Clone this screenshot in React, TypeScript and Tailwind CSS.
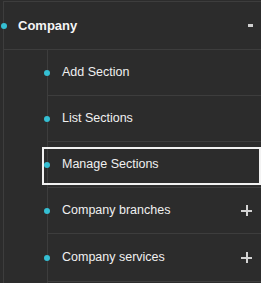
import React from "react";

const Dot = ({ className }: { className: string }) => (
  <span className={"shrink-0 w-[6px] h-[6px] rounded-full bg-[#35bfd3] " + className} />
);

const Plus = () => (
  <span className="ml-auto mr-[9px] flex flex-col items-center justify-center w-[11px] h-[11px] relative">
    <span className="w-[11px] h-[2px] bg-[#d4d4d4]" />
    <span className="absolute w-[2px] h-[11px] bg-[#d4d4d4]" />
  </span>
);

const Row = ({
  label,
  plus,
  focused,
  h = "h-[46px]",
}: {
  label: string;
  plus?: boolean;
  focused?: boolean;
  h?: string;
}) => (
  <div className={"relative border-b border-[#3d3d3d] flex items-center " + h}>
    {focused && (
      <div className="absolute left-[-6px] top-[5px] w-[219px] h-[38px] border-2 border-[#f2f2f2]" />
    )}
    <Dot className="ml-[-4px] mr-[12px]" />
    <span className="text-[12.5px] text-[#f0f0f0] leading-none">{label}</span>
    {plus && <Plus />}
  </div>
);

export default function App() {
  return (
    <div className="w-[261px] h-[283px] bg-[#2c2c2c] overflow-hidden font-['Liberation_Sans',Arial,sans-serif]">
      <div className="ml-[3px] mt-[1px] border-l border-t border-[#3d3d3d] h-[400px]">
        <div className="h-[48px] border-b border-[#3d3d3d] flex items-center">
          <Dot className="ml-[-3px] mr-[11px]" />
          <span className="text-[13px] font-bold text-[#f5f5f5] leading-none">Company</span>
          <span className="ml-auto mr-[8px] w-[5px] h-[3px] bg-[#cfcfcf]" />
        </div>
        <div className="ml-[43px] border-l border-[#3d3d3d] h-[400px] flex flex-col">
          <Row label="Add Section" />
          <Row label="List Sections" />
          <Row label="Manage Sections" focused />
          <Row label="Company branches" plus />
          <Row label="Company services" plus h="h-[48px]" />
        </div>
      </div>
    </div>
  );
}
